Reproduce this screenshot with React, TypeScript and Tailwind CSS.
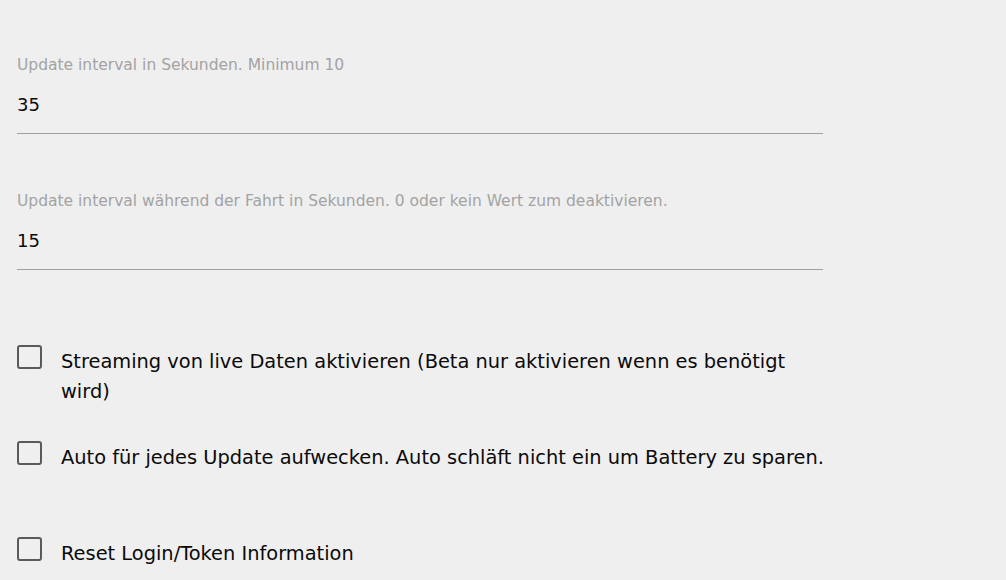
import { useState } from "react"

const fields = [
  { label: "Update interval in Sekunden. Minimum 10", value: "35" },
  { label: "Update interval während der Fahrt in Sekunden. 0 oder kein Wert zum deaktivieren.", value: "15" },
]

function Field({ label, value, first }: { label: string; value: string; first?: boolean }) {
  return (
    <div className={"w-[806px] " + (first ? "pt-[55px]" : "pt-[57px]")}>
      <div className="h-[20px] text-[15.5px] leading-[20px] text-[#a3a3a3]">{label}</div>
      <div className="mt-[17px] border-b border-[#9e9e9e] pb-[17px]">
        <div className="h-[24px] pt-[1px] text-[18px] leading-[24px] text-[#0a0a0a]">{value}</div>
      </div>
    </div>
  )
}

function Check({ label, className }: { label: string; className?: string }) {
  const [on, setOn] = useState(false)
  return (
    <label className={"flex cursor-pointer items-start gap-[19px] " + (className ?? "")}>
      <button
        onClick={() => setOn(!on)}
        className="mt-[-1px] h-[24px] w-[25px] shrink-0 rounded-[3px] border-2 border-[#5a5a5a]"
      />
      <span className="w-[772px] pt-[1px] text-[19.4px] leading-[30px] text-[#0a0a0a]">{label}</span>
    </label>
  )
}

export default function App() {
  return (
    <div className="min-h-screen bg-[#efefef] font-['DejaVu_Sans',sans-serif]">
      <div className="pl-[17px]">
        {fields.map((f, i) => (
          <Field key={i} label={f.label} value={f.value} first={i === 0} />
        ))}
        <Check className="mt-[76px]" label="Streaming von live Daten aktivieren (Beta nur aktivieren wenn es benötigt wird)" />
        <Check className="mt-[35px]" label="Auto für jedes Update aufwecken. Auto schläft nicht ein um Battery zu sparen." />
        <Check className="mt-[65px]" label="Reset Login/Token Information" />
      </div>
    </div>
  )
}
